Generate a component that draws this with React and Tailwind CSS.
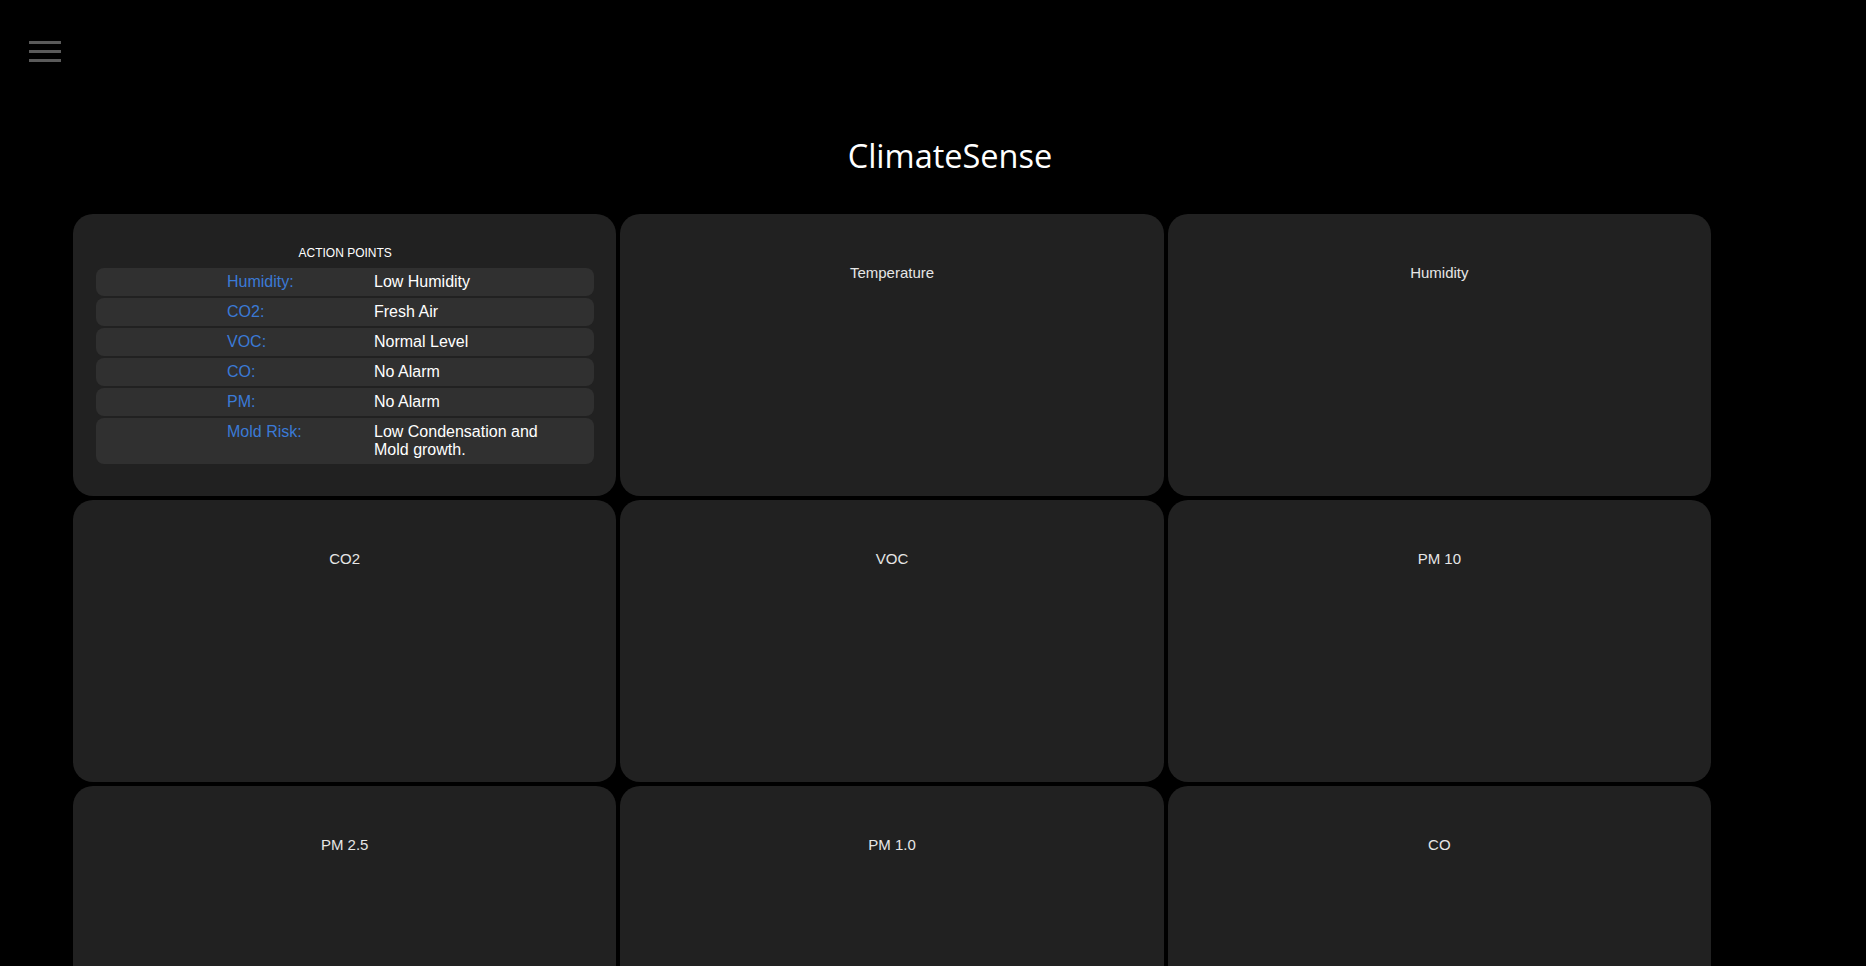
import React from "react";

// Action points shown in the first card
const actionPoints = [
    { label: "Humidity:", value: "Low Humidity" },
    { label: "CO2:", value: "Fresh Air" },
    { label: "VOC:", value: "Normal Level" },
    { label: "CO:", value: "No Alarm" },
    { label: "PM:", value: "No Alarm" },
    { label: "Mold Risk:", value: "Low Condensation and Mold growth." },
];

const sensorCards = ["Temperature", "Humidity", "CO2", "VOC", "PM 10", "PM 2.5", "PM 1.0", "CO"];

function MenuButton() {
    return (
        <button className="flex flex-col gap-[6px] w-8 pt-[41px] ml-[29px]" aria-label="menu">
            <span className="block h-[3px] w-8 bg-[#5a5a5a]" />
            <span className="block h-[3px] w-8 bg-[#5a5a5a]" />
            <span className="block h-[3px] w-8 bg-[#5a5a5a]" />
        </button>
    );
}

function ActionPointsCard() {
    return (
        <div className="bg-[#212121] rounded-[20px] h-[282px] pt-8 pl-[23px] pr-[22px]">
            <h3 className="text-[12px] leading-[14px] text-white text-center mb-2">ACTION POINTS</h3>
            <div className="flex flex-col gap-[2px]">
                {actionPoints.map((item, index) => (
                    <div key={index} className="flex bg-[#303030] rounded-lg py-[5px] pl-[131px] text-[16px] leading-[18px]">
                        <span className="w-[147px] shrink-0 text-[#3b7ad6]">{item.label}</span>
                        <span className="w-[180px] text-white">{item.value}</span>
                    </div>
                ))}
            </div>
        </div>
    );
}

function SensorCard({ title }) {
    return (
        <div className="bg-[#212121] rounded-[20px] h-[282px] pt-[50px]">
            <p className="text-center text-[15px] leading-[17px] text-[#e6e6e6]">{title}</p>
        </div>
    );
}

export default function App() {
    return (
        <div className="min-h-screen bg-black pb-10" style={{ fontFamily: '"Liberation Sans", Arial, sans-serif' }}>
            <MenuButton />

            <h1
                className="text-[32.5px] leading-none text-white text-center pl-[34px] mt-[78px] mb-[41px]"
                style={{ fontFamily: '"Open Sans", "Noto Sans", sans-serif' }}
            >
                ClimateSense
            </h1>

            <main className="ml-[73px] w-[1638px] grid grid-cols-3 gap-[4px]">
                <ActionPointsCard />
                {sensorCards.map((title) => (
                    <SensorCard key={title} title={title} />
                ))}
            </main>
        </div>
    );
}
